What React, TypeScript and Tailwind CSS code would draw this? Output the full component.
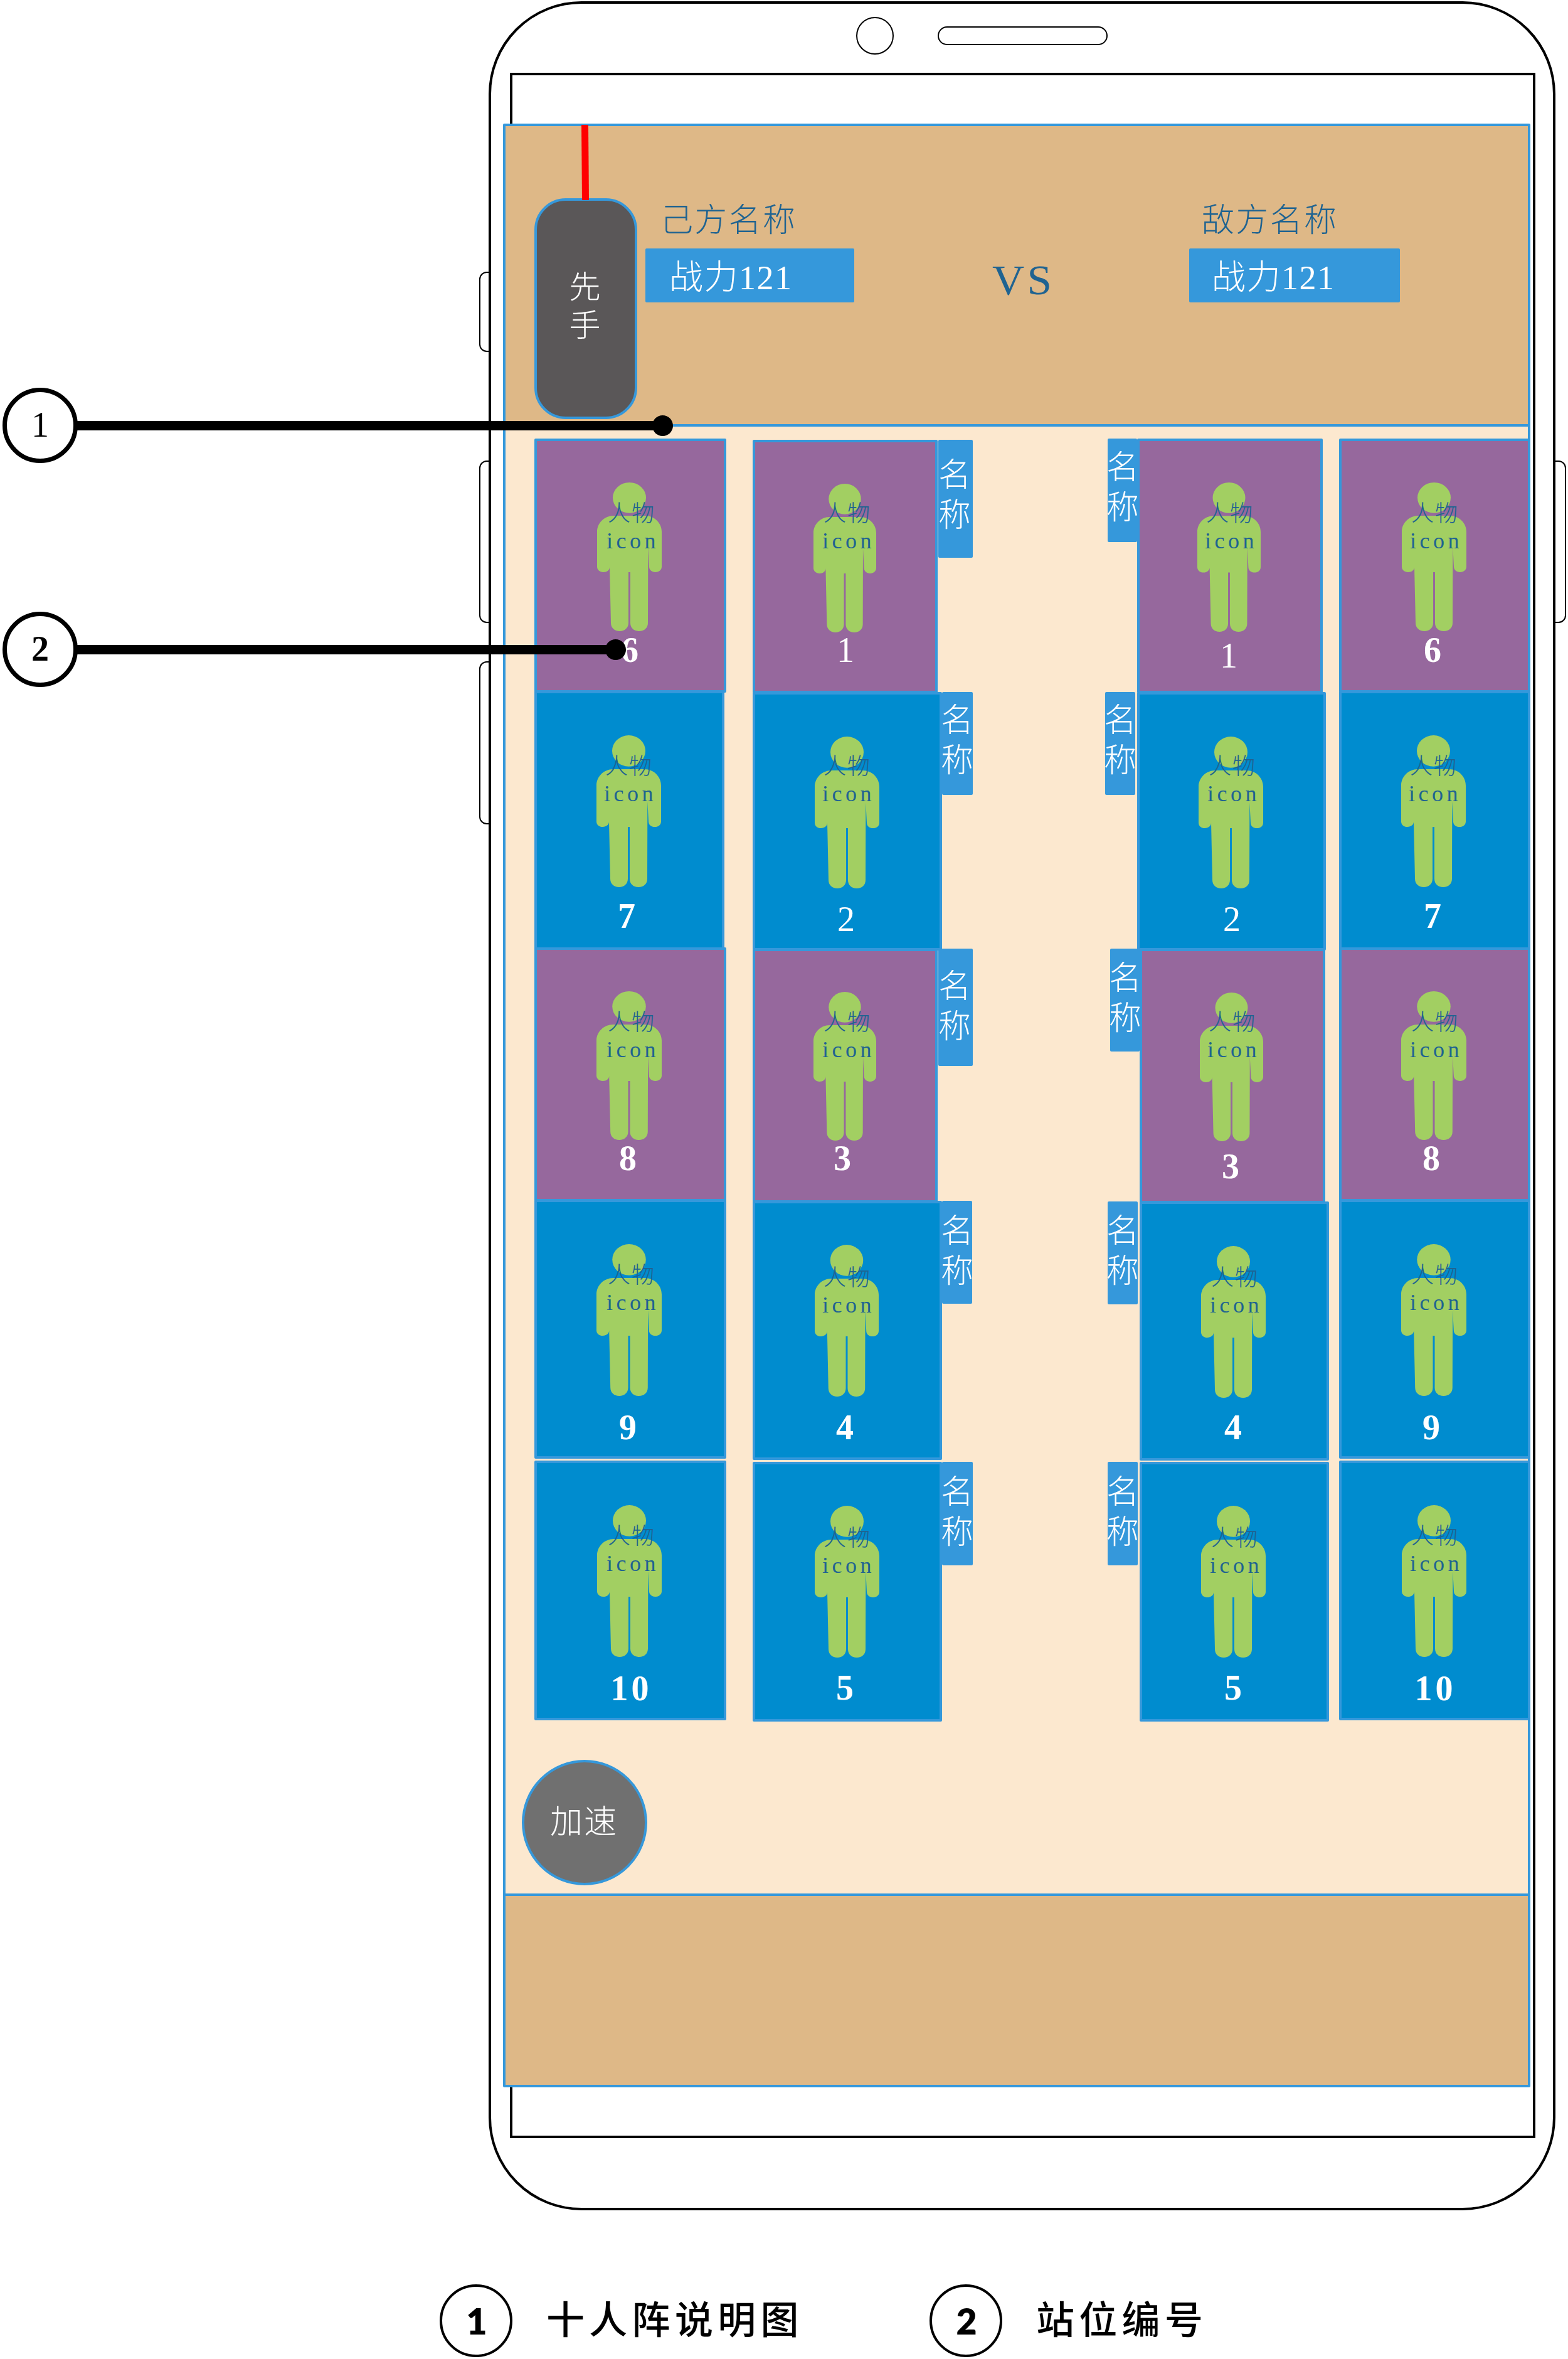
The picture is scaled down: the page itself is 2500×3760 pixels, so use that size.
import React from "react";

type Tile = {
  n: string;
  box: string;
  figure: string;
  label: string;
  num: string;
  tag?: string;
  row?: string;
};

const PURPLE = "bg-[#96689d]";
const BLUE = "bg-[#008ccf]";

const ownBack: Tile[] = [
  { n: "6", row: "", box: `${PURPLE} w-[306px] h-[405px]`, figure: "left-[96px] top-[66px] w-[103px] h-[237px]", label: "left-[113px] top-[98px]", num: "left-[88px] top-[305px] font-bold" },
  { n: "7", row: "-mt-[3px]", box: `${BLUE} w-[303px] h-[413px]`, figure: "left-[95px] top-[67px] w-[103px] h-[242px]", label: "left-[109px] top-[99px]", num: "left-[83px] top-[327px] font-bold" },
  { n: "8", row: "-mt-[4px]", box: `${PURPLE} w-[306px] h-[405px]`, figure: "left-[95px] top-[66px] w-[104px] h-[237px]", label: "left-[113px] top-[98px]", num: "left-[85px] top-[304px] font-bold" },
  { n: "9", row: "-mt-[3px]", box: `${BLUE} w-[306px] h-[413px]`, figure: "left-[95px] top-[67px] w-[104px] h-[242px]", label: "left-[113px] top-[99px]", num: "left-[85px] top-[331px] font-bold" },
  { n: "10", row: "mt-[3px]", box: `${BLUE} w-[306px] h-[414px]`, figure: "left-[96px] top-[67px] w-[103px] h-[242px]", label: "left-[113px] top-[99px]", num: "left-[88px] top-[331px] font-bold" },
];

const ownFront: Tile[] = [
  { n: "1", row: "", box: `${PURPLE} w-[295px] h-[404px]`, figure: "left-[93px] top-[66px] w-[100px] h-[237px]", label: "left-[109px] top-[96px]", num: "left-[84px] top-[303px]", tag: "ml-px w-[55px] h-[188px] pt-[25px] pl-[2px]" },
  { n: "2", row: "-mt-[2px]", box: `${BLUE} w-[302px] h-[412px]`, figure: "left-[95px] top-[67px] w-[103px] h-[242px]", label: "left-[109px] top-[97px]", num: "left-[85px] top-[330px]", tag: "w-[49px] h-[164px] pt-[14px]" },
  { n: "3", row: "-mt-[3px]", box: `${PURPLE} w-[295px] h-[405px]`, figure: "left-[93px] top-[65px] w-[100px] h-[237px]", label: "left-[109px] top-[96px]", num: "left-[79px] top-[302px] font-bold", tag: "ml-px w-[55px] h-[187px] pt-[29px] pl-[2px]" },
  { n: "4", row: "-mt-[3px]", box: `${BLUE} w-[302px] h-[413px]`, figure: "left-[95px] top-[66px] w-[102px] h-[242px]", label: "left-[109px] top-[101px]", num: "left-[83px] top-[329px] font-bold", tag: "w-[48px] h-[164px] pt-[17px]" },
  { n: "5", row: "mt-[3px]", box: `${BLUE} w-[302px] h-[414px]`, figure: "left-[95px] top-[66px] w-[103px] h-[242px]", label: "left-[109px] top-[100px]", num: "left-[83px] top-[328px] font-bold", tag: "w-[49px] h-[165px] pt-[17px]" },
];

const enemyFront: Tile[] = [
  { n: "1", row: "ml-[4px]", box: `${PURPLE} w-[296px] h-[406px]`, figure: "left-[92px] top-[66px] w-[101px] h-[238px]", label: "left-[106px] top-[98px]", num: "left-[82px] top-[314px]", tag: "w-[47px] h-[165px] pt-[15px]" },
  { n: "2", row: "-mt-[2px]", box: `${BLUE} w-[301px] h-[412px]`, figure: "left-[94px] top-[67px] w-[103px] h-[242px]", label: "left-[110px] top-[97px]", num: "left-[87px] top-[330px]", tag: "mr-[3px] w-[48px] h-[164px] pt-[14px]" },
  { n: "3", row: "-mt-[3px] ml-[8px]", box: `${PURPLE} w-[296px] h-[406px]`, figure: "left-[92px] top-[66px] w-[101px] h-[237px]", label: "left-[106px] top-[96px]", num: "left-[81px] top-[315px] font-bold", tag: "w-[47px] h-[164px] pt-[16px]" },
  { n: "4", row: "-mt-[3px] ml-[4px]", box: `${BLUE} w-[302px] h-[413px]`, figure: "left-[94px] top-[67px] w-[103px] h-[242px]", label: "left-[110px] top-[100px]", num: "left-[85px] top-[328px] font-bold", tag: "mr-[3px] w-[48px] h-[164px] pt-[16px]" },
  { n: "5", row: "mt-[2px] ml-[4px]", box: `${BLUE} w-[302px] h-[414px]`, figure: "left-[94px] top-[66px] w-[103px] h-[242px]", label: "left-[110px] top-[100px]", num: "left-[85px] top-[328px] font-bold", tag: "mr-[3px] w-[48px] h-[165px] pt-[17px]" },
];

const enemyBack: Tile[] = [
  { n: "6", row: "", box: `${PURPLE} w-[305px] h-[405px]`, figure: "left-[96px] top-[66px] w-[103px] h-[237px]", label: "left-[111px] top-[98px]", num: "left-[85px] top-[305px] font-bold" },
  { n: "7", row: "-mt-[3px]", box: `${BLUE} w-[305px] h-[413px]`, figure: "left-[95px] top-[67px] w-[103px] h-[242px]", label: "left-[109px] top-[99px]", num: "left-[85px] top-[327px] font-bold" },
  { n: "8", row: "-mt-[4px]", box: `${PURPLE} w-[305px] h-[405px]`, figure: "left-[95px] top-[66px] w-[104px] h-[237px]", label: "left-[111px] top-[98px]", num: "left-[83px] top-[304px] font-bold" },
  { n: "9", row: "-mt-[3px]", box: `${BLUE} w-[305px] h-[413px]`, figure: "left-[95px] top-[67px] w-[104px] h-[242px]", label: "left-[111px] top-[99px]", num: "left-[83px] top-[331px] font-bold" },
  { n: "10", row: "mt-[3px]", box: `${BLUE} w-[305px] h-[414px]`, figure: "left-[96px] top-[67px] w-[103px] h-[242px]", label: "left-[111px] top-[99px]", num: "left-[87px] top-[331px] font-bold" },
];

function Person({ className }: { className: string }) {
  return (
    <svg viewBox="0 0 309 711" preserveAspectRatio="none" className={`absolute ${className}`} fill="#a2cf62">
      <ellipse cx="154.5" cy="73" rx="79.5" ry="73" />
      <path d="M80 159H229C275 159 309 195 309 235V403C309 419 296 429 279 429S249 419 249 403L244 310L243 672C243 695 226 711 201 711S159 695 159 672V429H150V672C150 695 132 711 108 711S66 695 66 672L60 405C60 419 47 429 30 429S0 419 0 403V235C0 195 34 159 80 159Z" />
    </svg>
  );
}

function Cell({ tile }: { tile: Tile }) {
  return (
    <div className={`relative shrink-0 rounded-[2px] border-4 border-[#3598db] ${tile.box}`}>
      <Person className={tile.figure} />
      <div className={`absolute w-[90px] text-[36px] font-light text-[#1f6391] ${tile.label}`}>
        <div className="h-[36px] leading-[36px] tracking-[2px]">人物</div>
        <div className="-ml-[2px] mt-[7px] h-[36px] leading-[36px] tracking-[5.5px]">icon</div>
      </div>
      <div className={`absolute w-[120px] text-center text-[56px] leading-[56px] text-white ${tile.num}`}>
        <span className={tile.n === "10" ? "tracking-[5px] -mr-[5px]" : ""}>{tile.n}</span>
      </div>
    </div>
  );
}

function NameTag({ className }: { className: string }) {
  return (
    <div className={`shrink-0 rounded-[2px] bg-[#3598db] ${className}`}>
      <div className="-ml-[2px] w-[52px] text-[52px] leading-[64px] font-light break-all text-white">名称</div>
    </div>
  );
}

function Column({ tiles, side, className }: { tiles: Tile[]; side?: "left" | "right"; className: string }) {
  return (
    <div className={`flex shrink-0 flex-col ${className}`}>
      {tiles.map((t) => (
        <div key={t.n} className={`flex items-start ${t.row}`}>
          {side === "left" && t.tag && <NameTag className={t.tag} />}
          <Cell tile={t} />
          {side === "right" && t.tag && <NameTag className={t.tag} />}
        </div>
      ))}
    </div>
  );
}

function Side({ name, className }: { name: string; className: string }) {
  return (
    <div className={`shrink-0 pt-[125px] ${className}`}>
      <div className="h-[52px] text-[52px] leading-[52px] font-light tracking-[2.3px] text-[#1f6391]">{name}</div>
    </div>
  );
}

function Power({ className }: { className: string }) {
  return (
    <div className={`flex h-[86px] items-start rounded-[2px] bg-[#3598db] text-[54px] leading-[54px] font-light tracking-[1.5px] text-white ${className}`}>
      战力121
    </div>
  );
}

function Callout({ n, className, line, bold }: { n: string; className: string; line: string; bold?: boolean }) {
  return (
    <div className={`absolute left-[4px] flex h-[120px] items-center ${className}`}>
      <div className={`flex size-[120px] shrink-0 items-center justify-center rounded-full border-[7px] border-black pb-[2px] text-[56px] leading-[56px] ${bold ? "font-bold" : ""}`}>
        {n}
      </div>
      <div className={`-ml-[3px] h-[15px] bg-black ${line}`} />
      <div className="-ml-[16px] size-[33px] rounded-full bg-black" />
    </div>
  );
}

function Legend({ n, text, className }: { n: string; text: string; className: string }) {
  return (
    <div className={`flex items-center ${className}`}>
      <div className="flex size-[116px] items-center justify-center rounded-full border-4 border-black pl-[2px] font-['Lato'] text-[57px] leading-[57px] font-extrabold">
        {n}
      </div>
      <div className="ml-[54px] text-[61px] leading-[61px] font-medium tracking-[7.3px]">{text}</div>
    </div>
  );
}

export default function App() {
  return (
    <div className="relative h-[3760px] w-[2500px] overflow-hidden bg-white pt-[2px] font-['Liberation_Serif','Noto_Sans_CJK_SC',serif] text-black">
      <div className="relative ml-[779px] h-[3521px] w-[1701px]">
        {/* hardware buttons */}
        <div className="absolute top-[431px] -left-[15px] h-[128px] w-[40px] rounded-[12px] border-2 border-black" />
        <div className="absolute top-[732px] -left-[15px] h-[259px] w-[40px] rounded-[12px] border-2 border-black" />
        <div className="absolute top-[1052px] -left-[15px] h-[260px] w-[40px] rounded-[12px] border-2 border-black" />
        <div className="absolute top-[732px] -right-[17px] h-[259px] w-[40px] rounded-[12px] border-2 border-black" />

        <div className="relative h-[3521px] w-[1701px] rounded-[148px] border-4 border-black bg-white">
          <div className="mb-[9px] flex h-[101px] items-center pl-[582px]">
            <div className="size-[60px] rounded-full border-2 border-black" />
            <div className="ml-[70px] h-[30px] w-[271px] rounded-full border-2 border-black" />
          </div>

          <div className="ml-[30px] h-[3292px] w-[1635px] border-4 border-black pt-[77px]">
            <div className="-ml-[15px] flex h-[3130px] w-[1638px] flex-col rounded-[2px] border-4 border-[#3598db] bg-[#fce8cf]">
              <header className="flex h-[479px] shrink-0 items-start border-b-4 border-[#3598db] bg-[#deb887]">
                <div className="-mt-[2px] ml-[46px] w-[164px] shrink-0">
                  <svg className="relative z-10 block h-[117px] w-[164px] overflow-visible">
                    <path d="M80.5 0L81.5 120" stroke="#ff0000" strokeWidth="11" />
                  </svg>
                  <div className="flex h-[352px] w-[164px] justify-center rounded-[50px] border-4 border-[#3598db] bg-[#5a5758] pt-[108px] pr-[3px]">
                    <div className="w-[50px] text-[50px] leading-[61px] font-light break-all text-white">先手</div>
                  </div>
                </div>
                <div className="ml-[13px] shrink-0">
                  <Side name="己方名称" className="ml-[24px]" />
                  <Power className="mt-[18px] w-[333px] pt-[20px] pl-[38px]" />
                </div>
                <div className="ml-[220px] w-[314px] shrink-0 pt-[212px] text-[67px] leading-[67px] text-[#1f6391]">
                  <div className="w-[100px] origin-left scale-x-[1.06] tracking-[4px]">VS</div>
                </div>
                <div className="shrink-0">
                  <Side name="敌方名称" className="ml-[20px]" />
                  <Power className="mt-[18px] w-[336px] pt-[20px] pl-[36px]" />
                </div>
              </header>

              <main className="h-[2342px] shrink-0 border-b-4 border-[#3598db]">
                <div className="flex h-[2064px] items-start">
                  <Column tiles={ownBack} className="mt-[19px] ml-[46px] w-[306px]" />
                  <Column tiles={ownFront} side="right" className="mt-[21px] ml-[42px] w-[351px]" />
                  <Column tiles={enemyFront} side="left" className="mt-[19px] ml-[211px] w-[357px]" />
                  <Column tiles={enemyBack} className="mt-[19px] ml-[16px] w-[305px]" />
                </div>
                <div className="mt-[61px] ml-[26px] flex size-[200px] items-center justify-center rounded-full border-4 border-[#3598db] bg-[#707070] pr-[2px] text-[52px] leading-[52px] font-light tracking-[2px] text-white">
                  加速
                </div>
              </main>

              <footer className="flex-1 bg-[#deb887]" />
            </div>
          </div>
        </div>
      </div>

      <div className="mt-[118px] flex">
        <Legend n="1" text="十人阵说明图" className="ml-[701px] w-[781px]" />
        <Legend n="2" text="站位编号" className="" />
      </div>

      <Callout n="1" className="top-[618px]" line="w-[935px]" />
      <Callout n="2" className="top-[975px]" line="w-[860px]" bold />
    </div>
  );
}
